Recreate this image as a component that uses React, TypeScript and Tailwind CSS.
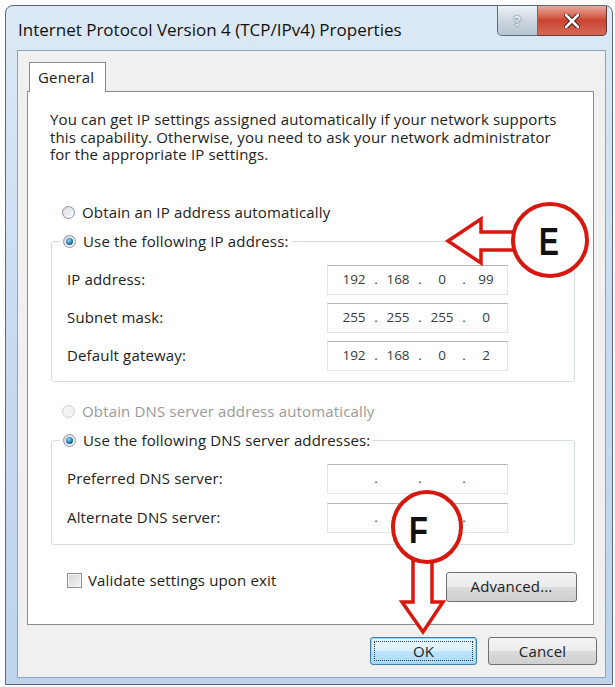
import { Fragment } from 'react';

function Radio({ checked = false, disabled = false }: { checked?: boolean; disabled?: boolean }) {
  return (
    <span
      className={`flex h-[13px] w-[13px] shrink-0 items-center justify-center rounded-full border ${
        disabled ? 'border-[#c9cdd2] bg-[#f3f3f3]' : 'border-[#8a96a3] bg-gradient-to-br from-[#d6d9dc] to-[#fbfbfb]'
      }`}
    >
      {checked && (
        <span className="h-[7px] w-[7px] rounded-full bg-[radial-gradient(circle_at_40%_35%,#8fd8f8,#1a6fa3_60%,#0b3e63)]" />
      )}
    </span>
  );
}

function IpBox({ parts }: { parts: string[] }) {
  return (
    <div className="flex h-[30px] w-[181px] items-center border border-[#e2e6eb] border-t-[#b3b7bd] bg-white pl-[10px] text-[13.5px] tracking-normal text-[#3b3b3b]">
      {parts.map((p, i) => (
        <Fragment key={i}>
          {i > 0 && <span className="w-[12px] text-center">.</span>}
          <span className="w-[32px] text-center">{p}</span>
        </Fragment>
      ))}
    </div>
  );
}

function Row({ label, parts }: { label: string; parts: string[] }) {
  return (
    <div className="flex items-center">
      <span className="w-[260px]">{label}</span>
      <IpBox parts={parts} />
    </div>
  );
}

function Annotations() {
  const red = '#d8170f';
  return (
    <svg className="pointer-events-none absolute left-0 top-0" width="615" height="687" viewBox="0 0 615 687">
      {/* E: arrow pointing left at the static IP option */}
      <polygon
        points="448,241 481,219 481,232 514,232 514,250 481,250 481,263"
        fill="white"
        stroke={red}
        strokeWidth="3.5"
        strokeLinejoin="miter"
      />
      <ellipse cx="550" cy="240" rx="37" ry="36" fill="white" stroke={red} strokeWidth="4" />
      <text
        x="539"
        y="255"
        fontFamily="'Liberation Sans', Arial, sans-serif"
        fontWeight="700"
        fontSize="38"
        textLength="20"
        lengthAdjust="spacingAndGlyphs"
        fill="#111"
      >
        E
      </text>
      {/* F: arrow pointing down at OK */}
      <polygon
        points="413,560 432,560 432,602 443,602 423,632 402,602 413,602"
        fill="white"
        stroke={red}
        strokeWidth="3.5"
        strokeLinejoin="miter"
      />
      <ellipse cx="427" cy="527" rx="34" ry="35" fill="white" stroke={red} strokeWidth="4" />
      <text
        x="409"
        y="543"
        fontFamily="'Liberation Sans', Arial, sans-serif"
        fontWeight="700"
        fontSize="36"
        textLength="19"
        lengthAdjust="spacingAndGlyphs"
        fill="#111"
      >
        F
      </text>
    </svg>
  );
}

export default function App() {
  return (
    <div className="relative h-[687px] w-[615px] overflow-hidden bg-white font-['Open_Sans',sans-serif] text-[15px] tracking-[0.15px] text-[#222]">
      <div className="ml-[5px] mt-[5px] flex h-[680px] w-[608px] flex-col rounded-t-[8px] border border-[#5b6b7d] bg-gradient-to-b from-[#dce9f6] via-[#c8dbf0] to-[#bdd4ec]">
        {/* title bar */}
        <div className="flex h-[44px] shrink-0 items-start">
          <span className="pl-[12px] pt-[13px] text-[17px] leading-[22px] tracking-normal text-[#111]">
            Internet Protocol Version 4 (TCP/IPv4) Properties
          </span>
          <div className="ml-auto mr-[5px] flex h-[30px]">
            <div className="flex w-[41px] items-center justify-center rounded-bl-[5px] border border-t-0 border-[#5d6d80] bg-gradient-to-b from-[#eef2f6] via-[#cdd6e0] to-[#b8c4d2] text-[14px] font-bold text-[#e9eef3] [text-shadow:0_0_2px_#3c4a5a]">
              ?
            </div>
            <div className="flex w-[69px] items-center justify-center rounded-br-[5px] border border-l-0 border-t-0 border-[#5d3a36] bg-gradient-to-b from-[#e9a99c] via-[#c9432f] to-[#d66a58]">
              <svg width="16" height="14" viewBox="0 0 16 14">
                <path d="M2 1 L14 13 M14 1 L2 13" stroke="#3b1a16" strokeWidth="4.5" strokeLinecap="round" />
                <path d="M2 1 L14 13 M14 1 L2 13" stroke="#fff" strokeWidth="2.5" strokeLinecap="round" />
              </svg>
            </div>
          </div>
        </div>

        {/* client area */}
        <div className="mb-[6px] ml-[11px] mr-[6px] flex flex-1 flex-col border border-[#8ea3bc] bg-[#f0f0f0]">
          <div className="pl-[11px] pt-[11px]">
            <div className="relative z-10 -mb-px flex h-[30px] w-[77px] items-center border border-b-0 border-[#898c95] bg-white pl-[8px]">
              General
            </div>
          </div>
          <div className="ml-[9px] mr-[11px] flex h-[534px] flex-col border border-[#898c95] bg-white">
            <p className="whitespace-nowrap pl-[22px] pt-[19px] leading-[17.5px]">
              You can get IP settings assigned automatically if your network supports
              <br />
              this capability. Otherwise, you need to ask your network administrator
              <br />
              for the appropriate IP settings.
            </p>

            <div className="ml-[34px] mt-[39px] flex h-[20px] items-center gap-[7px]">
              <Radio />
              <span>Obtain an IP address automatically</span>
            </div>

            <fieldset className="ml-[23px] mr-[18px] mt-[9px] rounded-[3px] border border-[#d5dde4] pb-[10px] pl-[8px]">
              <legend className="px-[3px]">
                <span className="flex h-[20px] items-center gap-[7px]">
                  <Radio checked />
                  <span>Use the following IP address:</span>
                </span>
              </legend>
              <div className="mt-[13px] flex flex-col gap-[8px] pl-[7px]">
                <Row label="IP address:" parts={['192', '168', '0', '99']} />
                <Row label="Subnet mask:" parts={['255', '255', '255', '0']} />
                <Row label="Default gateway:" parts={['192', '168', '0', '2']} />
              </div>
            </fieldset>

            <div className="ml-[34px] mt-[20px] flex h-[20px] items-center gap-[7px] text-[#9a9a9a]">
              <Radio disabled />
              <span>Obtain DNS server address automatically</span>
            </div>

            <fieldset className="ml-[23px] mr-[18px] mt-[9px] rounded-[3px] border border-[#d5dde4] pb-[11px] pl-[8px]">
              <legend className="px-[3px]">
                <span className="flex h-[20px] items-center gap-[7px]">
                  <Radio checked />
                  <span>Use the following DNS server addresses:</span>
                </span>
              </legend>
              <div className="mt-[13px] flex flex-col gap-[9px] pl-[7px]">
                <Row label="Preferred DNS server:" parts={['', '', '', '']} />
                <Row label="Alternate DNS server:" parts={['', '', '', '']} />
              </div>
            </fieldset>

            <div className="ml-[39px] mr-[16px] mt-[27px] flex items-start">
              <span className="mt-[1px] h-[15px] w-[15px] border border-[#8e8f8f] bg-gradient-to-br from-[#d2d3d4] to-[#f5f5f5] shadow-[inset_0_0_0_1px_#f4f4f4]" />
              <span className="ml-[6px] leading-[17px]">Validate settings upon exit</span>
              <button className="ml-auto flex h-[30px] w-[131px] items-center justify-center rounded-[3px] border border-[#707070] bg-[linear-gradient(#f4f4f4,#ebebeb_50%,#dcdcdc_50%,#cfcfcf)] text-[#1b1b1b]">
                Advanced...
              </button>
            </div>
          </div>

          <div className="mr-[8px] mt-[12px] flex justify-end gap-[11px]">
            <button className="relative flex h-[28px] w-[107px] items-center justify-center rounded-[3px] border border-[#3c7fb1] bg-[linear-gradient(#eaf6fd,#d9f0fc_50%,#bee6fd_50%,#a7d9f5)] shadow-[inset_0_0_0_1px_#9fd5f3]">
              <span className="pointer-events-none absolute inset-[3px] border border-dotted border-[#1f3d55]" />
              OK
            </button>
            <button className="flex h-[28px] w-[109px] items-center justify-center rounded-[3px] border border-[#707070] bg-[linear-gradient(#f4f4f4,#ebebeb_50%,#dcdcdc_50%,#cfcfcf)]">
              Cancel
            </button>
          </div>
        </div>
      </div>
      <Annotations />
    </div>
  );
}
